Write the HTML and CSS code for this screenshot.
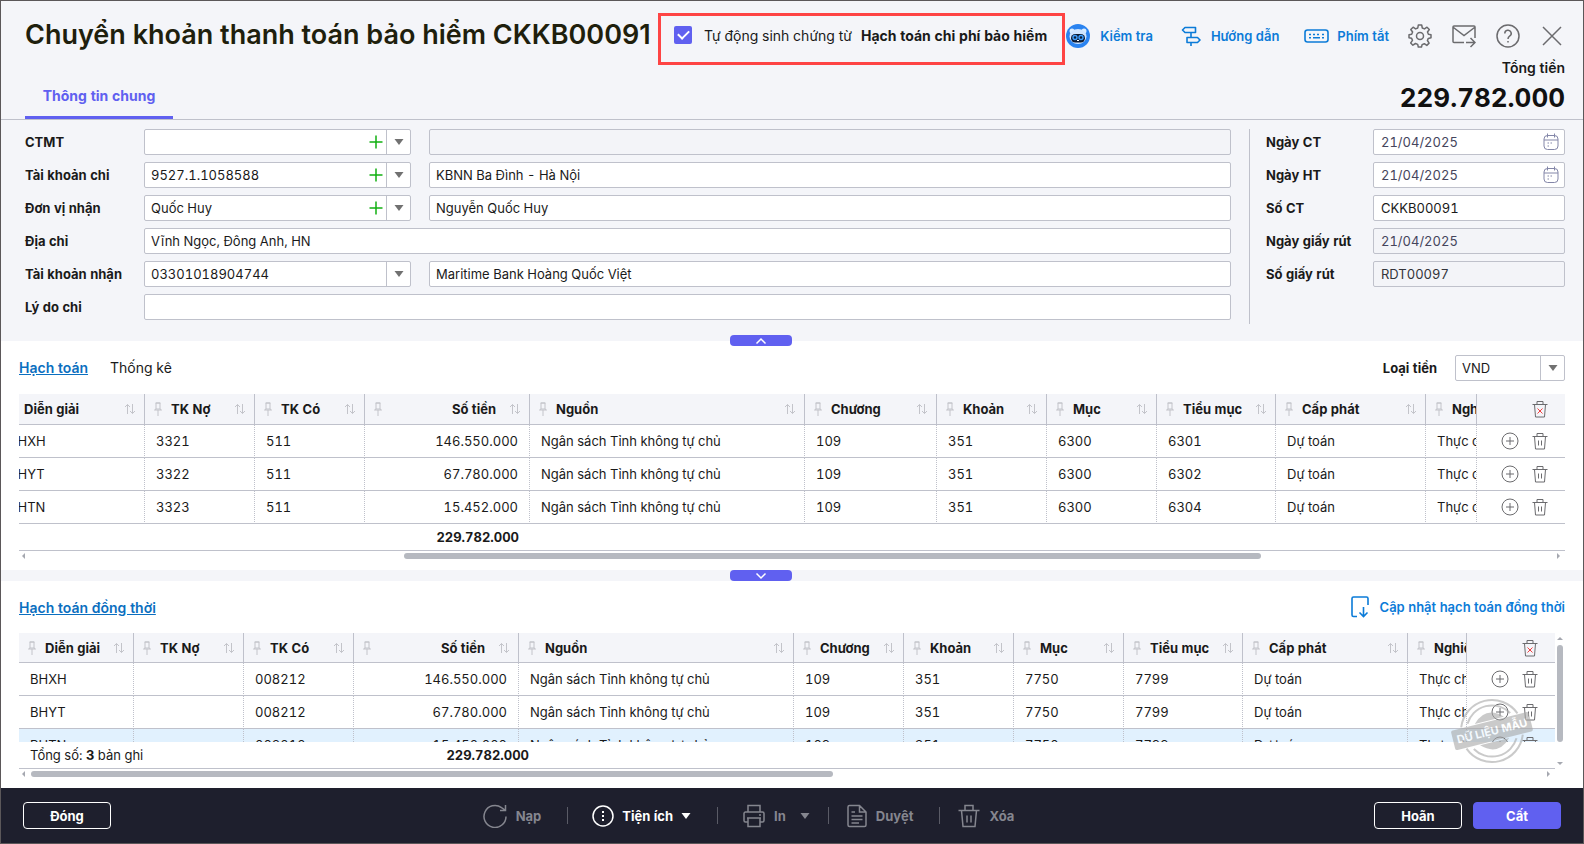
FILE: index.html
```
<!DOCTYPE html>
<html lang="vi">
<head>
    <meta charset="UTF-8">
    <meta name="viewport" content="width=device-width, initial-scale=1.0">
    <title>Chuyển khoản thanh toán bảo hiểm</title>
    <link rel="stylesheet" href="styles.css">
</head>
<body>
    <!-- Icon sprite -->
    <svg class="sprite" aria-hidden="true">
        <symbol id="i-pin" viewBox="0 0 8 14"><path d="M2 1h4v6H2zM0.5 8h7M4 8v6" /><path d="M1.500 1h5M2 7l-1.500 1M6 7l1.500 1" /></symbol>
        <symbol id="i-sort" viewBox="0 0 12 12"><path d="M3.500 11V1.500M1 4l2.500-2.500L6 4M8.500 1v9.500M6 8l2.500 2.500L11 8" /></symbol>
        <symbol id="i-caret" viewBox="0 0 10 8"><path d="M0.500 1h9L5 7z" /></symbol>
        <symbol id="i-plus" viewBox="0 0 14 14"><path d="M7 0.500v13M0.500 7h13" /></symbol>
        <symbol id="i-add" viewBox="0 0 18 18"><circle cx="9" cy="9" r="8" /><path d="M9 5v8M5 9h8" /></symbol>
        <symbol id="i-trash" viewBox="0 0 16 18"><path d="M0.500 4.500h15M5 4V1.500h6V4M2.500 4.500l1 12.500h9l1-12.500M6.500 8.500v5M9.500 8.500v5" /></symbol>
        <symbol id="i-trash-x" viewBox="0 0 16 18"><path d="M0.500 4.500h15M5 4V1.500h6V4M2.500 4.500l1 12.500h9l1-12.500" /><path class="red" d="M5.500 8.500l5 5M10.500 8.500l-5 5" /></symbol>
        <symbol id="i-calendar" viewBox="0 0 16 18"><rect x="1" y="2.500" width="14" height="14" rx="3.500" /><path d="M1 7h14M4.500 0.500v4M11.500 0.500v4M4.500 10h1.500M7.500 10h1.500M4.500 13h1.500" /></symbol>
    </svg>

    <header class="header">
        <div class="header-left">
            <div class="title-row">
                <h1>Chuyển khoản thanh toán bảo hiểm CKKB00091</h1>
                <label class="auto-box">
                    <input type="checkbox" checked>
                    <span>Tự động sinh chứng từ</span>
                    <b>Hạch toán chi phí bảo hiểm</b>
                </label>
            </div>
            <nav class="main-tabs">
                <a class="active" href="#general">Thông tin chung</a>
            </nav>
        </div>
        <div class="header-right">
            <div class="tools">
                <a class="tool" href="#check">
                    <svg width="24" height="24" viewBox="0 0 24 24">
                        <circle cx="12" cy="12" r="12" fill="#2a83f0" />
                        <circle cx="6" cy="7" r="2.500" fill="#d8ecff" /><circle cx="18" cy="7" r="2.500" fill="#d8ecff" />
                        <ellipse cx="12" cy="12.500" rx="8.500" ry="7.500" fill="#cfe5ff" />
                        <rect x="5" y="10" width="14" height="8.500" rx="4.200" fill="#0d1b33" />
                        <circle cx="9" cy="13.500" r="2" fill="none" stroke="#3fa0ff" stroke-width="1.400" />
                        <circle cx="15" cy="13.500" r="2" fill="none" stroke="#3fa0ff" stroke-width="1.400" />
                        <path d="M11 16.500h2" stroke="#fff" />
                    </svg>
                    <span>Kiểm tra</span>
                </a>
                <a class="tool" href="#guide">
                    <svg width="20" height="20" viewBox="0 0 20 20" fill="none" stroke="#0b7bd8" stroke-width="1.600" stroke-linejoin="round">
                        <path d="M4 1.500h10.500v5H4L1.500 4zM6 11.500h10.500L19 14l-2.500 2.500H6zM10 6.500v5M10 16.500V20" />
                    </svg>
                    <span>Hướng dẫn</span>
                </a>
                <a class="tool tool-keys" href="#shortcuts">
                    <svg width="25" height="14" viewBox="0 0 25 14" fill="none" stroke="#0b7bd8" stroke-width="1.600">
                        <rect x="1" y="1" width="23" height="12" rx="2.500" />
                        <path d="M5 5.500h2M9 5.500h2M13 5.500h2M18 5.500h2M5 8.700h2M9 8.700h7M18 8.700h2" />
                    </svg>
                    <span>Phím tắt</span>
                </a>
                <button class="icon-btn" type="button" aria-label="Thiết lập">
                    <svg width="24" height="24" viewBox="0 0 24 24">
                        <path stroke-linejoin="round" d="M10.300 1h3.400l.6 3 2.200.9L19 3.200 21.300 5.500 19.500 8l.9 2.300 2.600.5v3l-2.700.6-.9 2.100 1.700 2.600-2.300 2.300-2.500-1.700-2.200.9-.6 2.400h-3.200l-.6-2.600-2.200-.9-2.600 1.700-2.200-2.300L4.500 16.400l-.9-2.200-2.600-.5v-3l2.700-.5.9-2.200L2.800 5.500 5.100 3.200 7.600 4.900 9.800 4z" />
                        <circle cx="12" cy="12" r="3.500" />
                    </svg>
                </button>
                <button class="icon-btn" type="button" aria-label="Gửi thư">
                    <svg width="24" height="24" viewBox="0 0 24 24">
                        <path d="M12 18.500H2A1 1 0 0 1 1 17.500V3a1 1 0 0 1 1-1h20A1 1 0 0 1 23 3v11M1.500 3.500L12 11.500 22.500 3.500M14 18.500h9M18.500 14l4.500 4.500-4.500 4.500" />
                    </svg>
                </button>
                <button class="icon-btn" type="button" aria-label="Trợ giúp">
                    <svg width="24" height="24" viewBox="0 0 24 24">
                        <circle cx="12" cy="12" r="11" />
                        <path d="M8.800 9.500a3.200 3.200 0 1 1 4.800 2.700c-1.100.7-1.600 1.200-1.600 2.800M12 17v1.500" />
                    </svg>
                </button>
                <button class="icon-btn" type="button" aria-label="Đóng cửa sổ">
                    <svg width="24" height="24" viewBox="0 0 24 24"><path d="M3 3l18 18M21 3L3 21" /></svg>
                </button>
            </div>
            <div class="sum-label">Tổng tiền</div>
            <div class="sum-value">229.782.000</div>
        </div>
    </header>

    <section class="form" id="general">
        <div class="form-left">
            <label for="ctmt">CTMT</label>
            <div class="combo">
                <select id="ctmt"><option></option></select>
                <button class="combo-add" type="button" aria-label="Thêm"><svg><use href="#i-plus" /></svg></button>
                <span class="combo-caret"><svg><use href="#i-caret" /></svg></span>
            </div>
            <input class="field" type="text" aria-label="Tên CTMT" disabled>

            <label for="tkchi">Tài khoản chi</label>
            <div class="combo">
                <select id="tkchi"><option>9527.1.1058588</option></select>
                <button class="combo-add" type="button" aria-label="Thêm"><svg><use href="#i-plus" /></svg></button>
                <span class="combo-caret"><svg><use href="#i-caret" /></svg></span>
            </div>
            <input class="field" type="text" aria-label="Kho bạc" value="KBNN Ba Đình - Hà Nội">

            <label for="donvi">Đơn vị nhận</label>
            <div class="combo">
                <select id="donvi"><option>Quốc Huy</option></select>
                <button class="combo-add" type="button" aria-label="Thêm"><svg><use href="#i-plus" /></svg></button>
                <span class="combo-caret"><svg><use href="#i-caret" /></svg></span>
            </div>
            <input class="field" type="text" aria-label="Tên đơn vị nhận" value="Nguyễn Quốc Huy">

            <label for="diachi">Địa chỉ</label>
            <input class="field wide" type="text" id="diachi" value="Vĩnh Ngọc, Đông Anh, HN">

            <label for="tknhan">Tài khoản nhận</label>
            <div class="combo">
                <select id="tknhan"><option>03301018904744</option></select>
                <span class="combo-caret"><svg><use href="#i-caret" /></svg></span>
            </div>
            <input class="field" type="text" aria-label="Ngân hàng" value="Maritime Bank Hoàng Quốc Việt">

            <label for="lydo">Lý do chi</label>
            <input class="field wide" type="text" id="lydo">
        </div>
        <div class="form-right">
            <label for="ngayct">Ngày CT</label>
            <div class="date">
                <input class="field" type="text" id="ngayct" value="21/04/2025">
                <svg><use href="#i-calendar" /></svg>
            </div>
            <label for="ngayht">Ngày HT</label>
            <div class="date">
                <input class="field" type="text" id="ngayht" value="21/04/2025">
                <svg><use href="#i-calendar" /></svg>
            </div>
            <label for="soct">Số CT</label>
            <input class="field" type="text" id="soct" value="CKKB00091">
            <label for="ngaygr">Ngày giấy rút</label>
            <div class="date">
                <input class="field" type="text" id="ngaygr" value="21/04/2025" disabled>
            </div>
            <label for="sogr">Số giấy rút</label>
            <input class="field" type="text" id="sogr" value="RDT00097" disabled>
        </div>
        <button class="toggle toggle-up" type="button" aria-label="Thu gọn">
            <svg width="12" height="8" viewBox="0 0 12 8"><path d="M1.500 6.500L6 2l4.500 4.500" /></svg>
        </button>
    </section>

    <section class="panel">
        <div class="panel-head">
            <nav class="panel-tabs">
                <a class="active" href="#hachtoan">Hạch toán</a>
                <a href="#thongke">Thống kê</a>
            </nav>
            <div class="currency">
                <label for="loaitien">Loại tiền</label>
                <div class="combo">
                    <select id="loaitien"><option>VND</option></select>
                    <span class="combo-caret"><svg><use href="#i-caret" /></svg></span>
                </div>
            </div>
        </div>
        <div class="grid-wrap">
            <table class="grid grid-main">
                <colgroup>
                    <col class="w-147"><col class="w-110"><col class="w-110"><col class="w-165"><col class="w-275"><col class="w-132"><col class="w-110"><col class="w-110"><col class="w-119"><col class="w-150"><col><col class="w-88">
                </colgroup>
                <thead>
                    <tr>
                        <th><div><svg class="pin"><use href="#i-pin" /></svg><span>Diễn giải</span><svg class="sort"><use href="#i-sort" /></svg></div></th>
                        <th><div><svg class="pin"><use href="#i-pin" /></svg><span>TK Nợ</span><svg class="sort"><use href="#i-sort" /></svg></div></th>
                        <th><div><svg class="pin"><use href="#i-pin" /></svg><span>TK Có</span><svg class="sort"><use href="#i-sort" /></svg></div></th>
                        <th class="num"><div><svg class="pin"><use href="#i-pin" /></svg><span>Số tiền</span><svg class="sort"><use href="#i-sort" /></svg></div></th>
                        <th><div><svg class="pin"><use href="#i-pin" /></svg><span>Nguồn</span><svg class="sort"><use href="#i-sort" /></svg></div></th>
                        <th><div><svg class="pin"><use href="#i-pin" /></svg><span>Chương</span><svg class="sort"><use href="#i-sort" /></svg></div></th>
                        <th><div><svg class="pin"><use href="#i-pin" /></svg><span>Khoản</span><svg class="sort"><use href="#i-sort" /></svg></div></th>
                        <th><div><svg class="pin"><use href="#i-pin" /></svg><span>Mục</span><svg class="sort"><use href="#i-sort" /></svg></div></th>
                        <th><div><svg class="pin"><use href="#i-pin" /></svg><span>Tiểu mục</span><svg class="sort"><use href="#i-sort" /></svg></div></th>
                        <th><div><svg class="pin"><use href="#i-pin" /></svg><span>Cấp phát</span><svg class="sort"><use href="#i-sort" /></svg></div></th>
                        <th><div><svg class="pin"><use href="#i-pin" /></svg><span>Nghiệp vụ</span></div></th>
                        <th class="act"><button type="button" aria-label="Xóa tất cả"><svg class="trash"><use href="#i-trash-x" /></svg></button></th>
                    </tr>
                </thead>
                <tbody>
                    <tr>
                        <td>BHXH</td><td>3321</td><td>511</td><td class="num">146.550.000</td><td>Ngân sách Tỉnh không tự chủ</td><td>109</td><td>351</td><td>6300</td><td>6301</td><td>Dự toán</td><td>Thực chi</td>
                        <td class="act"><button type="button" aria-label="Thêm dòng"><svg class="add"><use href="#i-add" /></svg></button><button type="button" aria-label="Xóa dòng"><svg class="trash"><use href="#i-trash" /></svg></button></td>
                    </tr>
                    <tr>
                        <td>BHYT</td><td>3322</td><td>511</td><td class="num">67.780.000</td><td>Ngân sách Tỉnh không tự chủ</td><td>109</td><td>351</td><td>6300</td><td>6302</td><td>Dự toán</td><td>Thực chi</td>
                        <td class="act"><button type="button" aria-label="Thêm dòng"><svg class="add"><use href="#i-add" /></svg></button><button type="button" aria-label="Xóa dòng"><svg class="trash"><use href="#i-trash" /></svg></button></td>
                    </tr>
                    <tr>
                        <td>BHTN</td><td>3323</td><td>511</td><td class="num">15.452.000</td><td>Ngân sách Tỉnh không tự chủ</td><td>109</td><td>351</td><td>6300</td><td>6304</td><td>Dự toán</td><td>Thực chi</td>
                        <td class="act"><button type="button" aria-label="Thêm dòng"><svg class="add"><use href="#i-add" /></svg></button><button type="button" aria-label="Xóa dòng"><svg class="trash"><use href="#i-trash" /></svg></button></td>
                    </tr>
                </tbody>
            </table>
        </div>
        <div class="grid-total">
            <b class="total-main">229.782.000</b>
        </div>
        <div class="hscroll hscroll-main"><i class="arrow left"></i><div class="thumb"></div><i class="arrow right"></i></div>
    </section>

    <div class="splitter">
        <button class="toggle" type="button" aria-label="Mở rộng">
            <svg width="12" height="8" viewBox="0 0 12 8"><path d="M1.500 1.500L6 6l4.500-4.500" /></svg>
        </button>
    </div>

    <section class="panel panel-second">
        <div class="panel-head">
            <nav class="panel-tabs">
                <a class="active" href="#dongthoi">Hạch toán đồng thời</a>
            </nav>
            <a class="update-link" href="#update">
                <svg width="18" height="22" viewBox="0 0 18 22"><path d="M6 20.500H2.500A1.500 1.500 0 0 1 1 19V2.500A1.500 1.500 0 0 1 2.500 1h13A1.500 1.500 0 0 1 17 2.500V9M12.500 11v9.500M8.500 16.500l4 4 4-4" /></svg>
                <span>Cập nhật hạch toán đồng thời</span>
            </a>
        </div>
        <div class="grid-area">
            <div class="grid-box">
                <div class="grid-wrap grid-clip">
                    <table class="grid">
                        <colgroup>
                            <col class="w-115"><col class="w-110"><col class="w-110"><col class="w-165"><col class="w-275"><col class="w-110"><col class="w-110"><col class="w-110"><col class="w-119"><col class="w-165"><col><col class="w-88">
                        </colgroup>
                        <thead>
                            <tr>
                                <th><div><svg class="pin"><use href="#i-pin" /></svg><span>Diễn giải</span><svg class="sort"><use href="#i-sort" /></svg></div></th>
                                <th><div><svg class="pin"><use href="#i-pin" /></svg><span>TK Nợ</span><svg class="sort"><use href="#i-sort" /></svg></div></th>
                                <th><div><svg class="pin"><use href="#i-pin" /></svg><span>TK Có</span><svg class="sort"><use href="#i-sort" /></svg></div></th>
                                <th class="num"><div><svg class="pin"><use href="#i-pin" /></svg><span>Số tiền</span><svg class="sort"><use href="#i-sort" /></svg></div></th>
                                <th><div><svg class="pin"><use href="#i-pin" /></svg><span>Nguồn</span><svg class="sort"><use href="#i-sort" /></svg></div></th>
                                <th><div><svg class="pin"><use href="#i-pin" /></svg><span>Chương</span><svg class="sort"><use href="#i-sort" /></svg></div></th>
                                <th><div><svg class="pin"><use href="#i-pin" /></svg><span>Khoản</span><svg class="sort"><use href="#i-sort" /></svg></div></th>
                                <th><div><svg class="pin"><use href="#i-pin" /></svg><span>Mục</span><svg class="sort"><use href="#i-sort" /></svg></div></th>
                                <th><div><svg class="pin"><use href="#i-pin" /></svg><span>Tiểu mục</span><svg class="sort"><use href="#i-sort" /></svg></div></th>
                                <th><div><svg class="pin"><use href="#i-pin" /></svg><span>Cấp phát</span><svg class="sort"><use href="#i-sort" /></svg></div></th>
                                <th><div><svg class="pin"><use href="#i-pin" /></svg><span>Nghiệp vụ</span></div></th>
                                <th class="act"><button type="button" aria-label="Xóa tất cả"><svg class="trash"><use href="#i-trash-x" /></svg></button></th>
                            </tr>
                        </thead>
                        <tbody>
                            <tr>
                                <td>BHXH</td><td></td><td>008212</td><td class="num">146.550.000</td><td>Ngân sách Tỉnh không tự chủ</td><td>109</td><td>351</td><td>7750</td><td>7799</td><td>Dự toán</td><td>Thực chi</td>
                                <td class="act"><button type="button" aria-label="Thêm dòng"><svg class="add"><use href="#i-add" /></svg></button><button type="button" aria-label="Xóa dòng"><svg class="trash"><use href="#i-trash" /></svg></button></td>
                            </tr>
                            <tr>
                                <td>BHYT</td><td></td><td>008212</td><td class="num">67.780.000</td><td>Ngân sách Tỉnh không tự chủ</td><td>109</td><td>351</td><td>7750</td><td>7799</td><td>Dự toán</td><td>Thực chi</td>
                                <td class="act"><button type="button" aria-label="Thêm dòng"><svg class="add"><use href="#i-add" /></svg></button><button type="button" aria-label="Xóa dòng"><svg class="trash"><use href="#i-trash" /></svg></button></td>
                            </tr>
                            <tr class="selected">
                                <td>BHTN</td><td></td><td>008212</td><td class="num">15.452.000</td><td>Ngân sách Tỉnh không tự chủ</td><td>109</td><td>351</td><td>7750</td><td>7799</td><td>Dự toán</td><td>Thực chi</td>
                                <td class="act"><button type="button" aria-label="Thêm dòng"><svg class="add"><use href="#i-add" /></svg></button><button type="button" aria-label="Xóa dòng"><svg class="trash"><use href="#i-trash" /></svg></button></td>
                            </tr>
                        </tbody>
                    </table>
                </div>
                <div class="grid-total">
                    <span class="count">Tổng số: <b>3</b> bản ghi</span>
                    <b class="total-second">229.782.000</b>
                </div>
                <div class="hscroll hscroll-second"><i class="arrow left"></i><div class="thumb"></div><i class="arrow right"></i></div>
                <svg class="stamp" width="84" height="66" viewBox="-42 -33 84 66">
                    <g transform="rotate(-14)">
                        <g fill="none" stroke="#a8a8a8">
                            <path stroke-width="2" d="M-29 -11A31 31 0 0 1 29 -11M-29 11A31 31 0 0 0 29 11" />
                            <path stroke-width="2" d="M-22 -13A25.500 25.500 0 0 1 22 -13M-22 13A25.500 25.500 0 0 0 22 13" />
                        </g>
                        <path fill="#a8a8a8" d="M-15 -11Q0 -26 15 -11zM-15 11Q0 26 15 11z" />
                        <rect x="-40" y="-10" width="80" height="20" rx="2" fill="#a8a8a8" />
                        <text x="0" y="4" text-anchor="middle">DỮ LIỆU MẪU</text>
                    </g>
                </svg>
            </div>
            <div class="vscroll"><i class="arrow up"></i><div class="thumb"></div><i class="arrow down"></i></div>
        </div>
    </section>

    <footer class="footer">
        <button class="btn" type="button">Đóng</button>
        <div class="actions">
            <button class="action a-reload" type="button" disabled>
                <svg width="24" height="24" viewBox="0 0 24 24"><path d="M23 12.500A11 11 0 1 1 18.500 3.600L22 6M22.500 1v5.500H17" /></svg>
                <span>Nạp</span>
            </button>
            <button class="action a-util" type="button">
                <svg width="22" height="22" viewBox="0 0 22 22"><circle cx="11" cy="11" r="10" /><path stroke-width="2" d="M11 6v2M11 10v2M11 14v2" /></svg>
                <span>Tiện ích</span>
                <svg class="drop" width="10" height="8"><use href="#i-caret" /></svg>
            </button>
            <button class="action a-print" type="button" disabled>
                <svg width="22" height="24" viewBox="0 0 22 24"><path d="M5 8V1.500h12V8M5 18H2.500A1.500 1.500 0 0 1 1 16.500v-7A1.500 1.500 0 0 1 2.500 8h17A1.500 1.500 0 0 1 21 9.500v7a1.500 1.500 0 0 1-1.500 1.500H17M4 14h14M5 14v8.500h12V14M16 11h2" /></svg>
                <span>In</span>
                <svg class="drop" width="10" height="8"><use href="#i-caret" /></svg>
            </button>
            <button class="action a-approve" type="button" disabled>
                <svg width="20" height="24" viewBox="0 0 20 24"><path d="M12.500 1.500H2.500A1.500 1.500 0 0 0 1 3v18a1.500 1.500 0 0 0 1.500 1.500h15A1.500 1.500 0 0 0 19 21V8zM12.500 1.500V8H19M4.500 8H8M4.500 12h11M4.500 15.500h11M4.500 19H12" /></svg>
                <span>Duyệt</span>
            </button>
            <button class="action a-delete" type="button" disabled>
                <svg width="22" height="24" viewBox="0 0 22 24"><path d="M0.500 6.500h21M7 6V1.500h8V6M3.500 6.500L5 22.500h12l1.500-16M9 11.500v7M13 11.500v7" /></svg>
                <span>Xóa</span>
            </button>
        </div>
        <div class="footer-right">
            <button class="btn" type="button">Hoãn</button>
            <button class="btn btn-primary" type="button">Cất</button>
        </div>
    </footer>
</body>
</html>
```
FILE: styles.css
```
* {
    box-sizing: border-box;
}
body {
    margin: 0;
    min-height: 100vh;
    display: flex;
    flex-direction: column;
    border: 1px solid #5b5759;
    font-family: Inter, sans-serif;
    font-size: 13px;
    font-variant-numeric: tabular-nums;
    color: #1a1a1a;
    background: #fff;
}
button, input, select {
    font-family: inherit;
    font-size: inherit;
    font-variant-numeric: inherit;
    color: inherit;
}
button {
    padding: 0;
    border: none;
    background: none;
    cursor: pointer;
}
a {
    text-decoration: none;
    color: inherit;
}
b {
    font-weight: 700;
}
.sprite {
    display: none;
}

/* Header */
.header {
    display: flex;
    justify-content: space-between;
    height: 119px;
    padding: 0 18px 0 24px;
    background: #f4f5f9;
    border-bottom: 1px solid #bfc1cb;
}
.header-left {
    display: flex;
    flex-direction: column;
    justify-content: space-between;
}
.title-row {
    display: flex;
    align-items: flex-start;
    padding-top: 12px;
    white-space: nowrap;
}
h1 {
    width: 633px;
    margin: 0;
    font-size: 27px;
    font-weight: 600;
    font-variant-numeric: normal;
    line-height: 44px;
    color: #1f1f0d;
}
.auto-box {
    display: flex;
    align-items: flex-start;
    width: 407px;
    height: 52px;
    padding: 10px 13px;
    border: 3px solid #fe4444;
    font-size: 14px;
    line-height: 20px;
}
.auto-box input {
    appearance: none;
    width: 18px;
    height: 18px;
    margin: 0 12px 0 0;
    border-radius: 2px;
    background: #6060f0;
    display: grid;
    place-items: center;
}
.auto-box input::after {
    content: "";
    width: 9px;
    height: 5px;
    margin-bottom: 4px;
    border: solid #fff;
    border-width: 0 0 2px 2px;
    transform: rotate(-45deg);
}
.auto-box b {
    margin-left: 9px;
}
.main-tabs a {
    display: inline-block;
    width: 148px;
    height: 35px;
    border-bottom: 3px solid #6060f0;
    font-size: 14px;
    font-weight: 700;
    line-height: 24px;
    text-align: center;
    color: #6060f0;
}
.header-right {
    display: flex;
    flex-direction: column;
    align-items: flex-end;
    white-space: nowrap;
}
.tools {
    display: flex;
    align-items: center;
    height: 58px;
    padding: 11px 1px 0 0;
}
.tool {
    display: flex;
    align-items: center;
    height: 24px;
    margin-right: 28px;
    gap: 10px;
    font-weight: 600;
    color: #0b7bd8;
}
.tool-keys {
    gap: 8px;
    margin-left: -3px;
    margin-right: 19px;
}
.icon-btn {
    width: 24px;
    height: 24px;
    margin-left: 20px;
}
.tool-keys + .icon-btn {
    margin-left: 0;
}
.icon-btn svg {
    fill: none;
    stroke: #6b6b6e;
    stroke-width: 1.500;
    display: block;
}
.sum-label {
    font-size: 14px;
    font-weight: 600;
    line-height: 18px;
}
.sum-value {
    font-size: 26px;
    font-weight: 700;
    line-height: 42px;
    color: #111;
}

/* General information */
.form {
    position: relative;
    display: flex;
    height: 221px;
    padding: 9px 18px 0 24px;
    background: #f4f5f9;
}
.form label {
    font-weight: 700;
    line-height: 26px;
}
.form-left {
    flex: 1;
    display: grid;
    grid-template-columns: 119px 267px 1fr;
    grid-auto-rows: 26px;
    row-gap: 7px;
    padding-right: 18px;
}
.form-left .field:not(.wide) {
    margin-left: 18px;
}
.form-right {
    display: grid;
    grid-template-columns: 107px 192px;
    grid-auto-rows: 26px;
    row-gap: 7px;
    height: 195px;
    padding-left: 16px;
    border-left: 1px solid #bfc1cb;
}
.field {
    height: 26px;
    min-width: 0;
    padding: 0 6px;
    border: 1px solid #bfc1cb;
    border-radius: 2px;
    background: #fff;
}
.field:disabled {
    background: #f3f4f8;
    color: #33343a;
}
.field.wide {
    grid-column: 2 / 4;
}
.combo {
    display: flex;
    height: 26px;
    border: 1px solid #bfc1cb;
    border-radius: 2px;
    background: #fff;
}
.combo select {
    appearance: none;
    flex: 1;
    min-width: 0;
    padding: 0 6px;
    border: none;
    background: transparent;
}
.combo-add {
    width: 20px;
}
.combo-add svg {
    display: block;
    width: 14px;
    height: 14px;
    margin: auto;
    stroke: #12b012;
    stroke-width: 1.500;
}
.combo-caret {
    display: grid;
    place-items: center;
    width: 24px;
    border-left: 1px solid #bfc1cb;
}
.combo-caret svg {
    width: 10px;
    height: 8px;
    fill: #717171;
}
.date {
    position: relative;
    display: grid;
    color: #45455c;
}
.date .field:disabled {
    color: #45455c;
}
.form-right .field {
    padding-left: 7px;
}
.date svg {
    position: absolute;
    top: 4px;
    right: 6px;
    width: 16px;
    height: 18px;
    fill: none;
    stroke: #8386a8;
}
.toggle {
    display: grid;
    place-items: center;
    width: 62px;
    height: 11px;
    border-radius: 4px;
    background: #6060f0;
}
.toggle svg {
    fill: none;
    stroke: #fff;
    stroke-width: 1.500;
}
.toggle-up {
    position: absolute;
    right: 50%;
    bottom: -5px;
}
.splitter {
    height: 11px;
    padding-right: 50%;
    background: #f4f5f9;
}
.splitter .toggle {
    margin-left: auto;
}

/* Panels */
.panel {
    padding: 0 18px;
}
.panel-head {
    display: flex;
    align-items: center;
    justify-content: space-between;
    height: 53px;
}
.panel-tabs {
    display: flex;
    gap: 22px;
    font-size: 14px;
}
.panel-tabs .active {
    font-weight: 600;
    color: #0b6fc0;
    text-decoration: underline;
}
.currency {
    display: flex;
    align-items: center;
    gap: 18px;
    font-weight: 700;
}
.currency .combo {
    width: 110px;
    font-weight: 400;
}
.panel-second {
    flex: 1;
}
.panel-second .panel-head {
    height: 52px;
}
.update-link {
    display: flex;
    align-items: center;
    gap: 11px;
    font-weight: 600;
    color: #0b7bd8;
}
.update-link svg {
    fill: none;
    stroke: #0b7bd8;
    stroke-width: 1.600;
}

/* Grids */
.grid-wrap {
    overflow: hidden;
}
.grid-clip {
    height: 109px;
}
.grid {
    width: 100%;
    table-layout: fixed;
    border-collapse: separate;
    border-spacing: 0;
}
.grid-main {
    width: calc(100% + 21px);
    margin-left: -21px;
}
.w-88 { width: 88px; }
.w-110 { width: 110px; }
.w-115 { width: 115px; }
.w-119 { width: 119px; }
.w-132 { width: 132px; }
.w-147 { width: 147px; }
.w-150 { width: 150px; }
.w-165 { width: 165px; }
.w-275 { width: 275px; }
.grid th,
.grid td {
    overflow: hidden;
    white-space: nowrap;
    text-align: left;
    border-bottom: 1px solid #bfc1cb;
}
.grid th {
    height: 31px;
    padding: 0;
    font-weight: 700;
    background: #f4f5f9;
    border-right: 1px solid #bfc1cb;
}
.grid-clip .grid th {
    height: 30px;
}
.grid td {
    height: 33px;
    padding: 0 11px;
    border-right: 1px dotted #bfc1cb;
}
.grid tr > :last-child {
    border-right: none;
}
.grid th div {
    display: flex;
    align-items: center;
    padding: 0 8px 0 9px;
}
.grid th span {
    flex: 1;
    margin: 0 13px 0 9px;
}
.grid .num,
.grid .num span {
    text-align: right;
}
.pin {
    flex: none;
    width: 8px;
    height: 14px;
    fill: none;
    stroke: #c3c4ca;
}
.sort {
    flex: none;
    width: 12px;
    height: 12px;
    fill: none;
    stroke: #c3c4ca;
}
.grid .act {
    padding: 0 17px 0 0;
    text-align: right;
}
.grid .act button {
    height: 18px;
    margin-left: 13px;
    vertical-align: middle;
}
.add,
.trash {
    display: block;
    width: 18px;
    height: 18px;
    fill: none;
    stroke: #6b6b6e;
}
.trash {
    width: 16px;
}
.red {
    stroke: #f04040;
}
.selected td {
    background: #e1f1fe;
}
.grid-total {
    display: flex;
    align-items: center;
    height: 27px;
    border-bottom: 1px solid #bfc1cb;
}
.total-main {
    width: 500px;
    text-align: right;
}
.count {
    width: 310px;
    padding-left: 11px;
}
.total-second {
    width: 200px;
    text-align: right;
}

/* Scrollbars */
.hscroll {
    display: flex;
    align-items: center;
    height: 10px;
    padding: 0 5px 0 3px;
    margin-bottom: 9px;
}
.thumb {
    border-radius: 3px;
    background: #b6b9c0;
}
.hscroll .thumb {
    height: 6px;
}
.hscroll-main .thumb {
    width: calc(56% - 4px);
    margin-left: calc(25% - 6px);
}
.hscroll-second .thumb {
    width: calc(53% - 8px);
    margin-left: 6px;
}
.arrow {
    border: 3px solid transparent;
}
.arrow.left {
    border-left: none;
    border-right-color: #a5a8b0;
}
.arrow.right {
    margin-left: auto;
    border-right: none;
    border-left-color: #a5a8b0;
}
.grid-area {
    display: flex;
}
.grid-box {
    position: relative;
    flex: 1;
    min-width: 0;
}
.vscroll {
    display: flex;
    flex-direction: column;
    align-items: center;
    width: 10px;
    height: 136px;
    padding: 4px 2px 4px 1px;
}
.vscroll .thumb {
    width: 6px;
    height: 97px;
    margin-top: 5px;
}
.arrow.up {
    border-top: none;
    border-bottom-color: #a5a8b0;
}
.arrow.down {
    margin-top: auto;
    border-bottom: none;
    border-top-color: #a5a8b0;
}
.stamp {
    position: absolute;
    right: 21px;
    top: 65px;
    opacity: 0.6;
    pointer-events: none;
}
.stamp text {
    font-size: 11px;
    font-weight: 700;
    fill: #fff;
}

/* Footer */
.footer {
    display: flex;
    align-items: center;
    justify-content: space-between;
    height: 55px;
    padding: 0 22px;
    background: #1e1f2d;
    color: #fff;
}
.btn {
    width: 88px;
    height: 27px;
    border: 1px solid #fff;
    border-radius: 4px;
    font-weight: 700;
}
.btn-primary {
    border-color: #6060f0;
    background: #6060f0;
}
.footer-right {
    display: flex;
    gap: 11px;
}
.actions {
    display: flex;
    align-items: center;
    margin-left: 12px;
}
.action {
    display: flex;
    align-items: center;
    gap: 9px;
    height: 24px;
    font-weight: 700;
}
.action + .action::before {
    content: "";
    width: 1px;
    height: 17px;
    margin: 0 9px 0 26px;
    background: #5a5b66;
}
.action.a-util::before,
.action.a-print::before {
    margin-right: 16px;
}
.action.a-approve::before {
    margin-left: 18px;
}
.a-util {
    gap: 8px;
}
.a-print .drop {
    margin-left: 5px;
}
.action span {
    color: #fff;
}
.action svg {
    fill: none;
    stroke: #fff;
    stroke-width: 1.500;
}
.action svg.drop {
    fill: #fff;
    stroke: none;
}
.action:disabled span {
    color: #85868f;
}
.action:disabled svg {
    stroke: #85868f;
}
.action:disabled svg.drop {
    fill: #85868f;
    stroke: none;
}
```
